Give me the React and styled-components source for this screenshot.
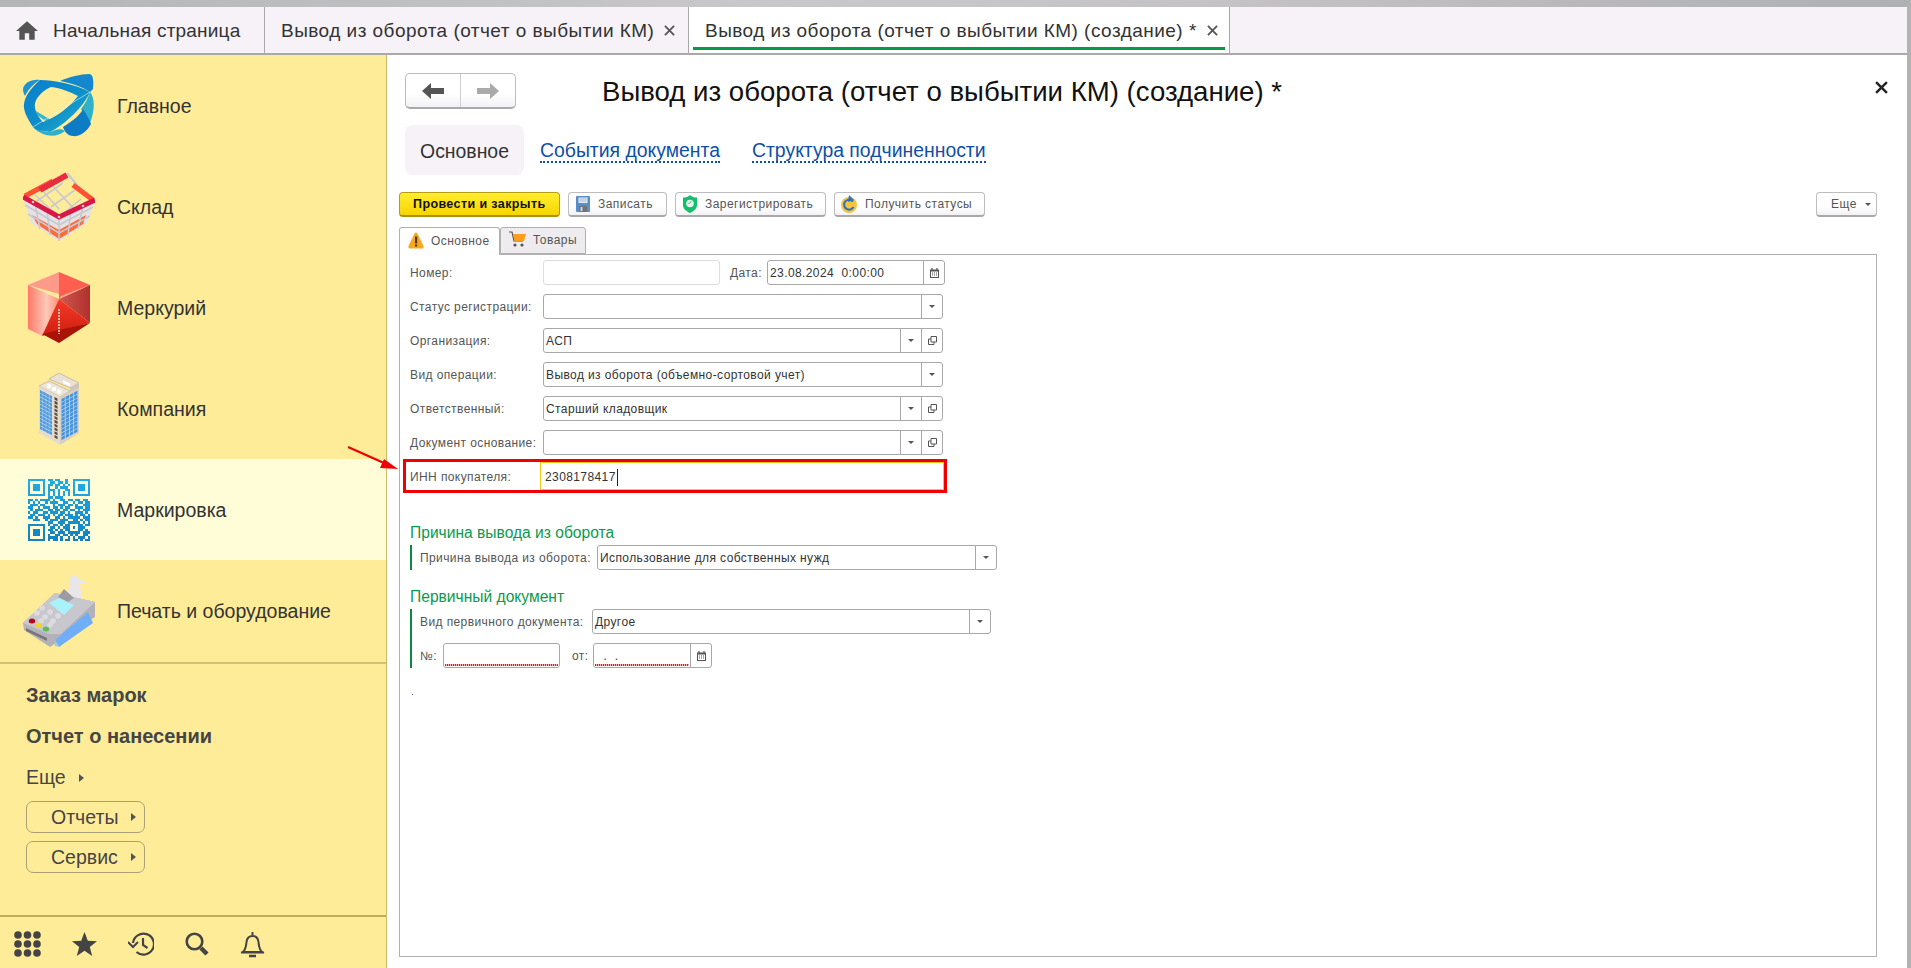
import React from "react";
import styled, { createGlobalStyle } from "styled-components";

const GlobalStyle = createGlobalStyle`
  html, body { margin: 0; padding: 0; background: #fff; }
  body { font-family: "Liberation Sans", Arial, sans-serif; }
  * { box-sizing: border-box; }
`;

const Page = styled.div`
  position: relative;
  width: 1911px;
  height: 968px;
  display: flex;
  flex-direction: column;
  overflow: hidden;
  background: #fff;
  border-right: 4px solid #b2b2b2;
`;

const TopStrip = styled.div`
  height: 7px;
  flex: none;
  background: linear-gradient(90deg, #b4b6b6 0%, #c8c8ca 40%, #c4c2c4 65%, #aeb0b4 100%);
`;

const TabBar = styled.div`
  height: 48px;
  flex: none;
  display: flex;
  background: #f6f2f7;
  border-bottom: 2px solid #a9a9a9;
`;

const Tab = styled.div`
  position: relative;
  width: ${(p) => p.$width}px;
  flex: none;
  display: flex;
  align-items: center;
  padding: 2px 0 0 ${(p) => p.$pad}px;
  border-right: 1px solid #a9a9a9;
  background: ${(p) => (p.$active ? "#fff" : "transparent")};
  color: #333;
  font-size: 19px;
  letter-spacing: ${(p) => p.$spacing}px;
  white-space: nowrap;
`;

const TabUnderline = styled.span`
  position: absolute;
  left: 4px;
  right: 4px;
  bottom: 3px;
  height: 3px;
  background: #069a46;
`;

const TabClose = styled.span`
  display: inline-flex;
  margin: -2px 0 0 ${(p) => p.$gap}px;
`;

const Body = styled.div`
  flex: 1;
  display: flex;
  min-height: 0;
`;

const Sidebar = styled.aside`
  width: 387px;
  flex: none;
  display: flex;
  flex-direction: column;
  background: #ffec99;
  border-right: 1px solid #cdbb6c;
`;

const NavItem = styled.div`
  height: 101px;
  display: flex;
  align-items: center;
  background: ${(p) => (p.$active ? "#fffcd8" : "transparent")};
  color: #333;
  font-size: 19.5px;
`;

const NavIcon = styled.div`
  width: 117px;
  flex: none;
  display: flex;
  justify-content: center;
`;

const NavLabel = styled.span`
  margin-top: 2px;
`;

const SideDivider = styled.div`
  height: 2px;
  flex: none;
  margin-top: 1px;
  background: ${(p) => p.$color};
`;

const SideLinks = styled.div`
  flex: 1;
  display: flex;
  flex-direction: column;
  padding: 11px 0 0 26px;
`;

const SideLink = styled.div`
  height: 41px;
  display: flex;
  align-items: center;
  color: #454545;
  font-size: ${(p) => (p.$bold ? 20 : 19.5)}px;
  font-weight: ${(p) => (p.$bold ? 700 : 400)};
`;

const Caret = styled.span`
  width: 0;
  height: 0;
  margin-left: 13px;
  border-left: 5px solid #555;
  border-top: 4px solid transparent;
  border-bottom: 4px solid transparent;
`;

const SideButton = styled.div`
  width: 119px;
  height: 32px;
  margin-top: ${(p) => p.$top}px;
  display: flex;
  align-items: center;
  padding-left: 24px;
  border: 1px solid #a9a074;
  border-radius: 7px;
  color: #454545;
  font-size: 19.5px;
`;

const SideFooter = styled.div`
  height: 51px;
  flex: none;
  display: flex;
  align-items: center;
  padding: 3px 0 0 14px;
  gap: 31px;
`;

const Main = styled.main`
  flex: 1;
  min-width: 0;
  display: flex;
  flex-direction: column;
  padding: 18px 0 0 12px;
`;

const Header = styled.div`
  height: 36px;
  flex: none;
  display: flex;
  align-items: center;
  padding: 0 19px 0 6px;
`;

const NavGroup = styled.div`
  width: 111px;
  height: 36px;
  display: flex;
  border: 1px solid #bbb;
  border-bottom: 2px solid #aaa;
  border-radius: 5px;
  background: linear-gradient(#fff 60%, #f3f1f4);
`;

const NavButton = styled.div`
  flex: 1;
  display: flex;
  align-items: center;
  justify-content: center;
  & + & { border-left: 1px solid #cfcfcf; }
`;

const Title = styled.h1`
  margin: 2px 0 0 86px;
  font-size: 27.6px;
  font-weight: 400;
  color: #111;
  white-space: nowrap;
`;

const CloseButton = styled.div`
  margin-left: auto;
  display: flex;
  margin-top: -8px;
`;

const SectionTabs = styled.div`
  height: 50px;
  flex: none;
  margin-top: 16px;
  margin-left: 6px;
  display: flex;
  align-items: center;
`;

const SectionPill = styled.div`
  width: 119px;
  height: 50px;
  display: flex;
  align-items: center;
  justify-content: center;
  padding-top: 2px;
  border-radius: 8px;
  background: #f6f2f7;
  color: #333;
  font-size: 19.4px;
`;

const SectionLink = styled.a`
  margin: 3px 0 0 ${(p) => p.$left}px;
  color: #0f4fa8;
  font-size: 19.4px;
  border-bottom: 2px dotted #0f4fa8;
  line-height: 21px;
`;

const Toolbar = styled.div`
  height: 25px;
  flex: none;
  margin-top: 17px;
  padding-right: 30px;
  display: flex;
  gap: 8px;
`;

const ToolButton = styled.div`
  width: ${(p) => p.$width}px;
  height: 25px;
  display: flex;
  align-items: center;
  padding-left: ${(p) => p.$pad}px;
  gap: 8px;
  border: 1px solid ${(p) => (p.$primary ? "#b59f10" : "#bdbdbd")};
  border-bottom: 2px solid ${(p) => (p.$primary ? "#a8940c" : "#a8a8a8")};
  border-radius: 4px;
  margin-left: ${(p) => (p.$push ? "auto" : "0")};
  background: ${(p) =>
    p.$primary ? "linear-gradient(#ffed30, #f8d500)" : "linear-gradient(#fff 60%, #f4f1f5)"};
  color: ${(p) => (p.$primary ? "#111" : "#555")};
  font-size: ${(p) => (p.$primary ? 12.5 : 12)}px;
  font-weight: ${(p) => (p.$primary ? 700 : 400)};
  letter-spacing: ${(p) => (p.$primary ? "0.4px" : "0.45px")};
  white-space: nowrap;
`;

const FormTabs = styled.div`
  height: 27px;
  flex: none;
  margin-top: 10px;
  display: flex;
  position: relative;
  z-index: 1;
`;

const FormTab = styled.div`
  width: ${(p) => p.$width}px;
  height: ${(p) => (p.$active ? 28 : 27)}px;
  display: flex;
  align-items: center;
  gap: 7px;
  padding: 0 0 2px 8px;
  border: 1px solid #b0b0b0;
  border-bottom: ${(p) => (p.$active ? "none" : "1px solid #b0b0b0")};
  border-radius: 3px 3px 0 0;
  background: ${(p) => (p.$active ? "#fff" : "#efecef")};
  color: #555;
  font-size: 12px;
  letter-spacing: 0.45px;
`;

const Panel = styled.section`
  width: 1478px;
  height: 703px;
  flex: none;
  padding: 5px 0 0 10px;
  border: 1px solid #b0b0b0;
`;

const Row = styled.div`
  height: 25px;
  margin-bottom: ${(p) => p.$bottom ?? 9}px;
  display: flex;
  align-items: center;
`;

const Label = styled.div`
  width: ${(p) => p.$width}px;
  flex: none;
  color: #555;
  font-size: 12px;
  letter-spacing: 0.4px;
  white-space: nowrap;
`;

const Input = styled.div`
  width: ${(p) => p.$width}px;
  height: 25px;
  flex: none;
  display: flex;
  border: 1px solid ${(p) => (p.$light ? "#dcdcdc" : "#a8a8a8")};
  border-radius: 3px;
  background: #fff;
`;

const InputText = styled.div`
  flex: 1;
  min-width: 0;
  display: flex;
  align-items: center;
  padding-left: 2px;
  color: #333;
  font-size: 12px;
  letter-spacing: 0.4px;
  white-space: pre;
  position: relative;
  &::after {
    content: "";
    display: ${(p) => (p.$required ? "block" : "none")};
    position: absolute;
    left: 1px;
    right: 1px;
    bottom: 1px;
    height: 2px;
    background: repeating-linear-gradient(90deg, #d42020 0 1px, #f4b0b0 1px 2px);
  }
`;

const InputButton = styled.div`
  width: 21px;
  flex: none;
  display: flex;
  align-items: center;
  justify-content: center;
  border-left: 1px solid #a8a8a8;
`;

const DropTriangle = styled.span`
  width: 0;
  height: 0;
  border-top: 3px solid #555;
  border-left: 3px solid transparent;
  border-right: 3px solid transparent;
`;

const HighlightRow = styled.div`
  width: 544px;
  height: 34px;
  margin: -5px 0 0 -7px;
  display: flex;
  align-items: stretch;
  padding-left: 4px;
  border: 3px solid #f00000;
`;

const HighlightLabel = styled(Label)`
  align-self: center;
  margin-top: 2px;
`;

const FocusInput = styled.div`
  flex: 1;
  display: flex;
  align-items: center;
  padding: 2px 0 0 4px;
  border: 1px solid #f7c41a;
  color: #333;
  font-size: 12px;
  letter-spacing: 0.4px;
`;

const Cursor = styled.span`
  width: 1px;
  height: 17px;
  margin-left: 1px;
  background: #222;
`;

const GroupTitle = styled.div`
  height: 20px;
  margin-top: ${(p) => p.$top}px;
  display: flex;
  align-items: center;
  color: #0a9a4e;
  font-size: 15.6px;
`;

const Group = styled.div`
  margin-top: 2px;
  padding-left: 8px;
  border-left: 2px solid #0a8a44;
`;

const InlineLabel = styled(Label)`
  margin-left: ${(p) => p.$left ?? 0}px;
`;

const StrayDot = styled.div`
  width: 1px;
  height: 1px;
  margin: 26px 0 0 2px;
  background: #6a6ae0;
`;

const Annotation = styled.svg`
  position: absolute;
  left: 340px;
  top: 440px;
  pointer-events: none;
`;

const XIcon = ({ size = 11, color = "#555", width = 2 }) => (
  <svg width={size} height={size} viewBox="0 0 12 12">
    <path d="M1 1L11 11M11 1L1 11" stroke={color} strokeWidth={width} />
  </svg>
);

const HomeIcon = () => (
  <svg width="22" height="19" viewBox="2 3 20 17" style={{ margin: "-2px 15px 0 0" }}>
    <path d="M10 20v-6h4v6h5v-8h3L12 3 2 12h3v8z" fill="#555" />
  </svg>
);

const ArrowIcon = ({ color, flip }) => (
  <svg width="22" height="16" viewBox="0 0 22 16" style={flip ? { transform: "scaleX(-1)" } : undefined}>
    <path d="M9 0L0 8l9 8v-5h13V5H9z" fill={color} />
  </svg>
);

const OrbitLogo = () => (
  <svg width="72" height="63" viewBox="0 0 72 63">
    <defs>
      <linearGradient id="orbA" x1="0" y1="0" x2="1" y2="1">
        <stop offset="0" stopColor="#0a7fcc" />
        <stop offset="0.55" stopColor="#0d8fca" />
        <stop offset="1" stopColor="#2fb4cc" />
      </linearGradient>
    </defs>
    <path d="M0 15C1 9 8 5 17 6 10 10 5 16 2 22 1 20 0 18 0 15z" fill="#1c93d2" />
    <path d="M37 7C46 3 58 0 66 0c4 0 5 6 4 15l-3 3C58 12 47 9 37 7z" fill="#1488cf" />
    <path d="M67 18c5 6 5 18 0 31-3-4-7-9-9-14 4-5 7-11 9-17z" fill="#2fb2c9" />
    <path d="M40 53c10-6 18-13 20-18 3 5 6 9 8 15-4 8-12 13-18 12-4 0-8-3-10-9z" fill="#0c7cc6" />
    <path d="M10 53c8 4 14 5 17 5 7-3 11-4 15-1-6 5-14 6-22 3-4-2-8-4-10-7z" fill="#2cb0cc" />
    <path d="M13 37l15 9-4 2-10-7z" fill="#35b6cf" />
    <path
      fillRule="evenodd"
      d="M17 6c13 0 35 4 50 12-7 16-25 32-40 40-9-1-16-3-17-5C4 44 0 36 1 30 2 22 8 14 17 6zM28 13c10 1 19 5 27 9-8 11-23 22-35 26-6-6-9-13-8-19 2-7 9-13 16-16z"
      fill="url(#orbA)"
    />
    <path d="M10 53L67 18" stroke="#dff4f8" strokeWidth="0.6" fill="none" />
  </svg>
);

const BasketIcon = () => (
  <svg width="72" height="72" viewBox="0 0 72 72">
    <path d="M0 26l8 26 28 18 28-18 8-22-36 16z" fill="#e4e2e2" />
    <path d="M9 44l27 15 27-15-3 9-24 15-22-15z" fill="#ff6a38" />
    <g stroke="#c8c8d2" strokeWidth="1.600" fill="none">
      <path d="M12 33l5 25M24 39l3 25M36 46v24M48 40l-3 24M60 35l-5 23" />
      <path d="M2 34l34 20 34-18M5 43l31 19 31-17" />
      <path d="M18 18l18 20M28 13l24 26M40 12L14 30M52 19L28 36M10 22l26 24 22-18" />
    </g>
    <path d="M44 2l22 26" stroke="#c8c8d2" strokeWidth="2" fill="none" />
    <path d="M2 25L30 10M50 14l20 15" stroke="#ff5030" strokeWidth="5" fill="none" />
    <path d="M0 26l36 20 36-17" stroke="#d81848" strokeWidth="5" fill="none" />
    <path d="M17 19L44 4" stroke="#ea2c40" strokeWidth="6" fill="none" />
    <circle cx="10" cy="31" r="1.300" fill="#f5c8cc" />
    <circle cx="36" cy="46" r="1.300" fill="#f5c8cc" />
    <circle cx="60" cy="35" r="1.300" fill="#f5c8cc" />
  </svg>
);

const GemIcon = () => (
  <svg width="62" height="71" viewBox="0 0 62 71">
    <defs>
      <linearGradient id="gemL" x1="0" y1="0" x2="1" y2="0">
        <stop offset="0" stopColor="#ff7a68" />
        <stop offset="0.6" stopColor="#ffc8b8" />
        <stop offset="1" stopColor="#ff8d78" />
      </linearGradient>
      <linearGradient id="gemR" x1="0" y1="0" x2="1" y2="0">
        <stop offset="0" stopColor="#d05850" />
        <stop offset="1" stopColor="#b0302c" />
      </linearGradient>
      <linearGradient id="gemC" x1="0" y1="0" x2="0" y2="1">
        <stop offset="0" stopColor="#f43a28" />
        <stop offset="1" stopColor="#d01e10" />
      </linearGradient>
    </defs>
    <path d="M0 13L31 0v22z" fill="#ff9a8a" />
    <path d="M31 0l31 13-31 14z" fill="#ff5f50" />
    <path d="M0 13l31 14-17 37-14-7z" fill="url(#gemL)" />
    <path d="M62 13v38L31 27z" fill="url(#gemR)" />
    <path d="M31 27l31 24-31 8-17 5z" fill="url(#gemC)" />
    <path d="M14 62l17-4 31-7-31 20z" fill="#a81408" />
    <path d="M31 27L62 13 33 24z" fill="#ffb090" />
    <path d="M31 37v25" stroke="#ffd8d0" strokeWidth="1.500" strokeDasharray="2 1" />
  </svg>
);

const BuildingIcon = () => {
  const cols = [0, 1, 2, 3];
  const rows = [...Array(11).keys()];
  return (
    <svg width="40" height="72" viewBox="0 0 40 72">
      <path d="M10 6L20 0l20 10-9 5z" fill="#e8e1d4" stroke="#bcb1a0" strokeWidth="0.800" />
      <path d="M24 7l7 3.500v3l-7-3.500z" fill="#fff" />
      <path d="M31 15l9-5v8l-9 6z" fill="#cfc5b6" />
      <path d="M0 13l10-5 21 10-10 6z" fill="#ece6da" stroke="#bcb1a0" strokeWidth="0.800" />
      <circle cx="10" cy="13" r="2.300" fill="#fff" />
      <circle cx="15" cy="16" r="2.300" fill="#fff" />
      <circle cx="20" cy="18.500" r="2.300" fill="#fff" />
      <path d="M0 13l21 11v48L0 60z" fill="#e3dccf" />
      <path d="M21 24l19-10v46L21 72z" fill="#d8cfc1" />
      <g transform="matrix(1 .52 0 1 1 17)" fill="#4a9be8">
        {rows.map((r) =>
          cols.map((c) => <rect key={`l${r}${c}`} x={c * 3.100} y={r * 3.600} width="2.700" height="3" />)
        )}
      </g>
      <g transform="matrix(1 .52 0 1 15.500 24)" fill="#5a4a3a">
        {rows.map((r) => (
          <rect key={`d${r}`} x="0" y={r * 3.800} width="3" height="2.600" />
        ))}
      </g>
      <g transform="matrix(1 -.52 0 1 22.500 26)" fill="#3f96e8">
        {rows.map((r) =>
          cols.map((c) => <rect key={`r${r}${c}`} x={c * 4.200} y={r * 3.800} width="3.300" height="3.100" />)
        )}
      </g>
    </svg>
  );
};

const qrRows = [
  "1111111011011001001111111",
  "1000001001101101001000001",
  "1011101011011010101011101",
  "1011101010010111001011101",
  "1011101011101001101011101",
  "1000001010101010101000001",
  "1111111010101010101111111",
  "0000000011011100000000000",
  "1101011110100110110110110",
  "1010100101110011001011011",
  "0111011000101110110100111",
  "1100101110110101100111011",
  "0101110011011011011010111",
  "1011001101110110100111010",
  "0110111010101101110101101",
  "1101001110011010111110111",
  "0011100101110111001101011",
  "0000000011001110111110101",
  "1111111010110101100011011",
  "1000001001101011101011100",
  "1011101011010101100011010",
  "1011101001101110111110111",
  "1011101010011011010100110",
  "1000001011110100101011101",
  "1111111010110101101101011",
];

const QrIcon = () => (
  <svg width="62" height="62" viewBox="0 0 25 25" shapeRendering="crispEdges">
    <defs>
      <linearGradient id="qrFill" x1="0" y1="0" x2="0" y2="1">
        <stop offset="0" stopColor="#20aee6" />
        <stop offset="1" stopColor="#1480c0" />
      </linearGradient>
    </defs>
    <path
      fill="url(#qrFill)"
      d={qrRows
        .map((row, y) =>
          [...row].map((v, x) => (v === "1" ? `M${x} ${y}h1v1h-1z` : "")).join("")
        )
        .join("")}
    />
  </svg>
);

const PosIcon = () => (
  <svg width="72" height="72" viewBox="0 0 72 72">
    <path d="M45 18l2-14c1-3 3-4 5-4 3 2 8 7 13 8-3 0-7 0-8 2l2 15-6 2z" fill="#e8e6e8" />
    <path d="M0 48L32 18l40 9v15L27 72 1 55z" fill="#b3b2b9" />
    <path d="M0 48L32 18l40 9-34 32-12 0z" fill="#c8c7cd" />
    <path d="M41 14l10 9-6 4-10-5z" fill="#9c9ba2" />
    <path d="M26 28l10-5 15 7-10 10z" fill="#a8f2fb" />
    <g fill="#dcdce0">
      <circle cx="19" cy="33" r="2.800" /><circle cx="27" cy="37" r="2.800" /><circle cx="35" cy="41" r="2.800" />
      <circle cx="14" cy="38" r="2.800" /><circle cx="22" cy="42" r="2.800" /><circle cx="30" cy="46" r="2.800" />
      <circle cx="27" cy="50" r="2.800" /><circle cx="18" cy="46" r="2.800" />
    </g>
    <ellipse cx="9" cy="46" rx="3.200" ry="2.500" fill="#b3081e" />
    <ellipse cx="16" cy="50" rx="3.200" ry="2.500" fill="#f4d32c" />
    <ellipse cx="23" cy="54" rx="3.200" ry="2.500" fill="#5cbc5c" />
    <path d="M3 53l21 10v3L3 56z" fill="#77767c" />
    <path d="M32 65l33-28 5 11-34 24z" fill="#70aef8" />
    <path d="M32 65l4 7 0 0-4-1z" fill="#9cc8f8" />
  </svg>
);

const FloppyIcon = () => (
  <svg width="14" height="16" viewBox="0 0 14 16">
    <rect width="14" height="16" rx="1" fill="#5a8ec8" />
    <rect x="2.500" y="1.500" width="9" height="5.500" fill="#e8eef6" />
    <path d="M3.500 3h7M3.500 5h7" stroke="#8aa8cc" strokeWidth="0.800" />
    <rect x="3" y="10" width="8" height="6" fill="#6c7480" />
    <rect x="4.500" y="11" width="2" height="4" fill="#ccd4dc" />
  </svg>
);

const ShieldIcon = () => (
  <svg width="14" height="18" viewBox="0 0 14 18">
    <path d="M7 0c2 2 4 2.500 7 2.500V10c0 4-4 6.500-7 8-3-1.500-7-4-7-8V2.500C3 2.500 5 2 7 0z" fill="#12bf6a" />
    <circle cx="7" cy="8.500" r="3.800" fill="#e8f8f0" />
    <path d="M5.500 9l1.500-1.500 1.500-1" stroke="#38a070" strokeWidth="1" fill="none" />
  </svg>
);

const RefreshIcon = () => (
  <svg width="16" height="18" viewBox="0 0 16 18">
    <circle cx="8" cy="10" r="8" fill="#f7c23c" />
    <path d="M12 6.500A5 5 0 1 0 12.500 12" stroke="#2a72c8" strokeWidth="2" fill="none" />
    <path d="M8 0l5 5-6 2z" fill="#2a72c8" />
  </svg>
);

const WarningIcon = () => (
  <svg width="16" height="17" viewBox="0 0 16 17">
    <path d="M8 0.500c1 0 1.500 1 2 2l5.500 11.500c.5 1.500 0 2.500-1.500 2.500H2c-1.500 0-2-1-1.500-2.500L6 2.500c.5-1 1-2 2-2z" fill="#f9a81e" />
    <rect x="7" y="4.500" width="2.200" height="7" fill="#4a3a20" />
    <rect x="7" y="12.500" width="2.200" height="2" fill="#4a3a20" />
  </svg>
);

const CartIcon = () => (
  <svg width="17" height="17" viewBox="0 0 17 17">
    <path d="M0 1h3l2 9h9" stroke="#555" strokeWidth="1.200" fill="none" />
    <path d="M4 3h13l-2 7H5.500z" fill="#fb9e1e" />
    <circle cx="6" cy="14" r="1.600" fill="#555" />
    <circle cx="13" cy="14" r="1.600" fill="#555" />
  </svg>
);

const CalendarIcon = () => (
  <svg width="9" height="10" viewBox="0 0 9 10">
    <path d="M0 1.500h9V10H0z" fill="#555" />
    <rect x="1" y="3.500" width="7" height="5.500" fill="#fff" />
    <path d="M2 0v2M7 0v2" stroke="#555" strokeWidth="1.200" />
    <path d="M2 5h1M4 5h1M6 5h1M2 7h1M4 7h1M6 7h1" stroke="#555" strokeWidth="1" />
  </svg>
);

const OpenIcon = () => (
  <svg width="9" height="9" viewBox="0 0 9 9">
    <path d="M3 .5h5.500V6H3zM3 3H.5v5.500H6V6" fill="none" stroke="#555" strokeWidth="1" />
  </svg>
);

const footerIcons = [
  <svg key="grid" width="27" height="26" viewBox="0 0 27 26" fill="#444">
    {[4, 13.5, 23].map((cx) =>
      [4, 13, 22].map((cy) => <circle key={`${cx}${cy}`} cx={cx} cy={cy} r="3.800" />)
    )}
  </svg>,
  <svg key="star" width="25" height="24" viewBox="0 0 25 24" fill="#444">
    <path d="M12.500 0l3.300 8.700 9.200.5-7.200 5.700 2.400 9-7.700-5.100-7.700 5.100 2.400-9L0 9.200l9.200-.5z" />
  </svg>,
  <svg key="history" width="26" height="24" viewBox="0 0 26 24" fill="none" stroke="#444" strokeWidth="2.200">
    <path d="M5 11a10.500 10.500 0 1 1 3.500 9" />
    <path d="M15 6v7l4.500 3" />
    <path d="M0 10l5 5 5-5" strokeWidth="2" />
  </svg>,
  <svg key="search" width="24" height="24" viewBox="0 0 24 24" fill="none" stroke="#444">
    <circle cx="9.500" cy="9.500" r="7.800" strokeWidth="2.600" />
    <path d="M16 16l6 6" strokeWidth="4.500" />
  </svg>,
  <svg key="bell" width="25" height="27" viewBox="0 0 25 27" fill="none" stroke="#444" strokeWidth="2">
    <path d="M12.500 1v3M3 21c3-3 3-6 3.500-10 .5-4 3-6 6-6s5.500 2 6 6c.5 4 .5 7 3.500 10z" />
    <path d="M9 25h7" strokeWidth="2.500" />
    <path d="M1 21.500h23" />
  </svg>,
];

const navItems = [
  { label: "Главное", icon: <OrbitLogo /> },
  { label: "Склад", icon: <BasketIcon /> },
  { label: "Меркурий", icon: <GemIcon /> },
  { label: "Компания", icon: <BuildingIcon /> },
  { label: "Маркировка", icon: <QrIcon />, active: true },
  { label: "Печать и оборудование", icon: <PosIcon /> },
];

const Select = ({ width, value, open }) => (
  <Input $width={width}>
    <InputText>{value}</InputText>
    <InputButton><DropTriangle /></InputButton>
    {open && <InputButton><OpenIcon /></InputButton>}
  </Input>
);

const App = () => (
  <Page>
    <GlobalStyle />
    <TopStrip />
    <TabBar>
      <Tab $width={265} $pad={16} $spacing={0.2}>
        <HomeIcon />
        Начальная страница
      </Tab>
      <Tab $width={424} $pad={16} $spacing={0.47}>
        Вывод из оборота (отчет о выбытии КМ)
        <TabClose $gap={10}><XIcon /></TabClose>
      </Tab>
      <Tab $width={541} $pad={16} $spacing={0.47} $active>
        Вывод из оборота (отчет о выбытии КМ) (создание) *
        <TabClose $gap={10}><XIcon /></TabClose>
        <TabUnderline />
      </Tab>
    </TabBar>
    <Body>
      <Sidebar>
        {navItems.map(({ label, icon, active }) => (
          <NavItem key={label} $active={active}>
            <NavIcon>{icon}</NavIcon>
            <NavLabel>{label}</NavLabel>
          </NavItem>
        ))}
        <SideDivider $color="#d0c078" />
        <SideLinks>
          <SideLink $bold>Заказ марок</SideLink>
          <SideLink $bold>Отчет о нанесении</SideLink>
          <SideLink>Еще<Caret /></SideLink>
          <SideButton $top={3}>Отчеты<Caret /></SideButton>
          <SideButton $top={8}>Сервис<Caret /></SideButton>
        </SideLinks>
        <SideDivider $color="#bfae58" />
        <SideFooter>{footerIcons}</SideFooter>
      </Sidebar>
      <Main>
        <Header>
          <NavGroup>
            <NavButton><ArrowIcon color="#555" /></NavButton>
            <NavButton><ArrowIcon color="#aaa" flip /></NavButton>
          </NavGroup>
          <Title>Вывод из оборота (отчет о выбытии КМ) (создание) *</Title>
          <CloseButton><XIcon size={13} color="#222" width={2.2} /></CloseButton>
        </Header>
        <SectionTabs>
          <SectionPill>Основное</SectionPill>
          <SectionLink $left={16}>События документа</SectionLink>
          <SectionLink $left={32}>Структура подчиненности</SectionLink>
        </SectionTabs>
        <Toolbar>
          <ToolButton $primary $width={161} $pad={13}>Провести и закрыть</ToolButton>
          <ToolButton $width={99} $pad={7}><FloppyIcon />Записать</ToolButton>
          <ToolButton $width={151} $pad={7}><ShieldIcon />Зарегистрировать</ToolButton>
          <ToolButton $width={151} $pad={6}><RefreshIcon />Получить статусы</ToolButton>
          <ToolButton $push $width={61} $pad={14}>Еще<DropTriangle /></ToolButton>
        </Toolbar>
        <FormTabs>
          <FormTab $active $width={101}><WarningIcon />Основное</FormTab>
          <FormTab $width={86}><CartIcon />Товары</FormTab>
        </FormTabs>
        <Panel>
          <Row>
            <Label $width={133}>Номер:</Label>
            <Input $width={177} $light />
            <InlineLabel $left={10} $width={37}>Дата:</InlineLabel>
            <Input $width={178}>
              <InputText>23.08.2024  0:00:00</InputText>
              <InputButton><CalendarIcon /></InputButton>
            </Input>
          </Row>
          <Row>
            <Label $width={133}>Статус регистрации:</Label>
            <Select width={400} />
          </Row>
          <Row>
            <Label $width={133}>Организация:</Label>
            <Select width={400} value="АСП" open />
          </Row>
          <Row>
            <Label $width={133}>Вид операции:</Label>
            <Select width={400} value="Вывод из оборота (объемно-сортовой учет)" />
          </Row>
          <Row>
            <Label $width={133}>Ответственный:</Label>
            <Select width={400} value="Старший кладовщик" open />
          </Row>
          <Row>
            <Label $width={133}>Документ основание:</Label>
            <Select width={400} open />
          </Row>
          <HighlightRow>
            <HighlightLabel $width={130}>ИНН покупателя:</HighlightLabel>
            <FocusInput>2308178417<Cursor /></FocusInput>
          </HighlightRow>
          <GroupTitle $top={30}>Причина вывода из оборота</GroupTitle>
          <Group>
            <Row $bottom={0}>
              <Label $width={177}>Причина вывода из оборота:</Label>
              <Select width={400} value="Использование для собственных нужд" />
            </Row>
          </Group>
          <GroupTitle $top={17}>Первичный документ</GroupTitle>
          <Group>
            <Row>
              <Label $width={172}>Вид первичного документа:</Label>
              <Select width={399} value="Другое" />
            </Row>
            <Row $bottom={0}>
              <Label $width={23}>№:</Label>
              <Input $width={117}><InputText $required /></Input>
              <InlineLabel $left={12} $width={21}>от:</InlineLabel>
              <Input $width={119}>
                <InputText $required>  .  .</InputText>
                <InputButton><CalendarIcon /></InputButton>
              </Input>
            </Row>
          </Group>
          <StrayDot />
        </Panel>
      </Main>
    </Body>
    <Annotation width="62" height="34" viewBox="0 0 62 34">
      <path d="M8 7L44 23" stroke="#f00000" strokeWidth="2.200" />
      <path d="M58 29L40 28l4-9z" fill="#f00000" />
    </Annotation>
  </Page>
);

export default App;
